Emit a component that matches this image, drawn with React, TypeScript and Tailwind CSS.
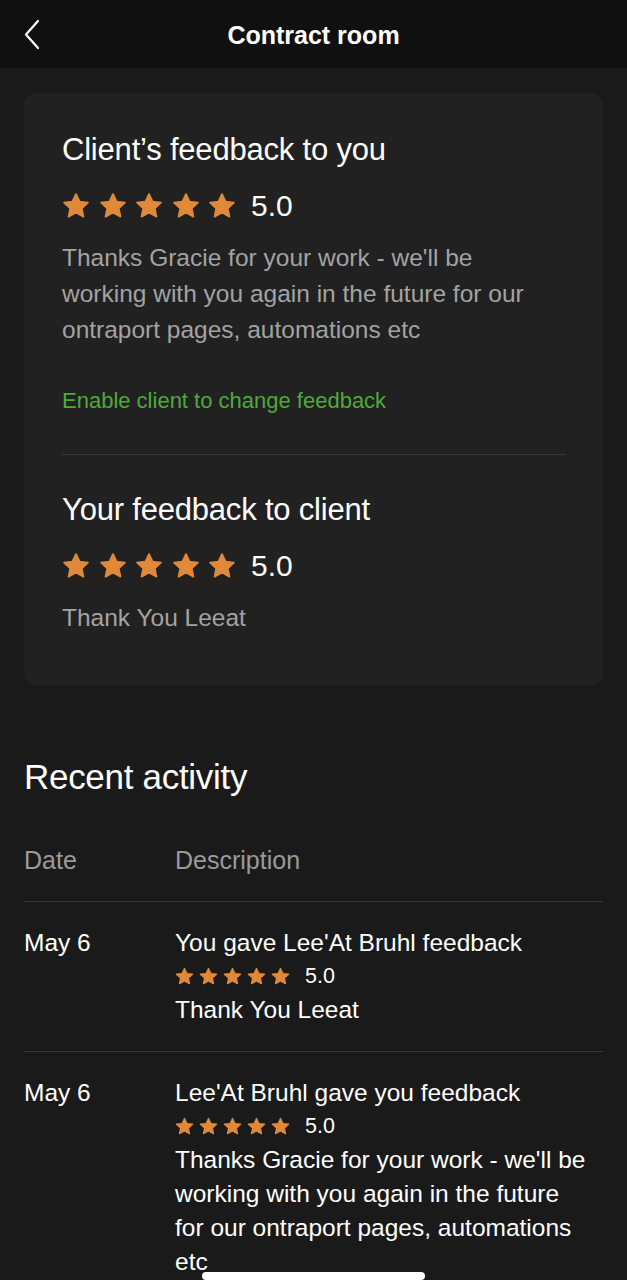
import React from "react";

const Star = ({ size }: { size: number }) => (
  <svg width={size} height={size} viewBox="0 0 24 24" aria-hidden>
    <path
      d="M12 1.8l3.05 6.55 7.15.8-5.3 4.87 1.45 7.08L12 17.55l-6.35 3.55 1.45-7.08-5.3-4.87 7.15-.8z"
      fill="#e0893a"
      stroke="#e0893a"
      strokeWidth="1.6"
      strokeLinejoin="round"
    />
  </svg>
);

const Stars = ({ size, gap, text }: { size: number; gap: string; text: string }) => (
  <div className="flex items-center">
    <div className={`flex items-center ${gap}`}>
      {[0, 1, 2, 3, 4].map((i) => (
        <Star key={i} size={size} />
      ))}
    </div>
    <span className={text}>5.0</span>
  </div>
);

export default function App() {
  return (
    <div
      className="min-h-[1280px] w-[627px] bg-[#1a1a1a] text-white relative overflow-hidden"
      style={{ fontFamily: '"Liberation Sans", Arial, sans-serif' }}
    >
      {/* Header */}
      <div className="h-[68px] bg-[#101010] flex items-center relative">
        <svg
          className="absolute left-[22px] top-[19px]"
          width="20"
          height="31"
          viewBox="0 0 20 31"
          fill="none"
        >
          <path d="M16 2L4 15.5L16 29" stroke="white" strokeWidth="2.2" strokeLinecap="round" strokeLinejoin="round" />
        </svg>
        <div className="w-full text-center text-[25px] leading-[30px] font-semibold pt-[2px]">Contract room</div>
      </div>

      {/* Card */}
      <div className="mx-[24px] mt-[25px] rounded-[12px] bg-[#212121] pl-[38px] pr-[37px] pt-[37px] pb-[51px]">
        <div className="text-[31px] leading-[40px] tracking-[-0.2px]">Client’s feedback to you</div>
        <div className="mt-[20px]">
          <Stars size={28} gap="gap-[8.5px]" text="ml-[15px] text-[30px] leading-[32px]" />
        </div>
        <div className="mt-[18px] w-[490px] text-[24.5px] leading-[36px] text-[#a3a3a3]">
          Thanks Gracie for your work - we'll be working with you again in the future for our ontraport pages, automations etc
        </div>
        <div className="mt-[39px] text-[22px] leading-[28px] text-[#4daa39]">Enable client to change feedback</div>
        <div className="mt-[39px] h-px bg-[#363636]" />
        <div className="mt-[35px] text-[31px] leading-[40px] tracking-[-0.2px]">Your feedback to client</div>
        <div className="mt-[20px]">
          <Stars size={28} gap="gap-[8.5px]" text="ml-[15px] text-[30px] leading-[32px]" />
        </div>
        <div className="mt-[20px] text-[24.5px] leading-[32px] text-[#a3a3a3]">Thank You Leeat</div>
      </div>

      {/* Recent activity */}
      <div className="px-[24px]">
        <div className="mt-[70px] text-[35px] leading-[44px] tracking-[-0.3px]">Recent activity</div>
        <div className="mt-[46px] flex text-[25px] leading-[30px] text-[#9a9a9a]">
          <div className="w-[151px]">Date</div>
          <div>Description</div>
        </div>
        <div className="mt-[26px] h-px bg-[#363636]" />

        <div className="flex pt-[25px] pb-[24px]">
          <div className="w-[151px] text-[24.5px] leading-[32px]">May 6</div>
          <div className="flex-1">
            <div className="text-[24.5px] leading-[32px]">You gave Lee'At Bruhl feedback</div>
            <div className="mt-[2px]">
              <Stars size={19} gap="gap-[5px]" text="ml-[15px] text-[21.5px] leading-[30px]" />
            </div>
            <div className="mt-[2px] text-[24.5px] leading-[34px]">Thank You Leeat</div>
          </div>
        </div>
        <div className="h-px bg-[#363636]" />

        <div className="flex pt-[25px]">
          <div className="w-[151px] text-[24.5px] leading-[32px]">May 6</div>
          <div className="flex-1">
            <div className="text-[24.5px] leading-[32px]">Lee'At Bruhl gave you feedback</div>
            <div className="mt-[2px]">
              <Stars size={19} gap="gap-[5px]" text="ml-[15px] text-[21.5px] leading-[30px]" />
            </div>
            <div className="mt-[2px] w-[415px] text-[24.5px] leading-[34px]">
              Thanks Gracie for your work - we'll be working with you again in the future for our ontraport pages, automations etc
            </div>
          </div>
        </div>
      </div>

      {/* Home indicator */}
      <div className="absolute left-[202px] top-[1272px] h-[8px] w-[223px] rounded-full bg-white" />
    </div>
  );
}
